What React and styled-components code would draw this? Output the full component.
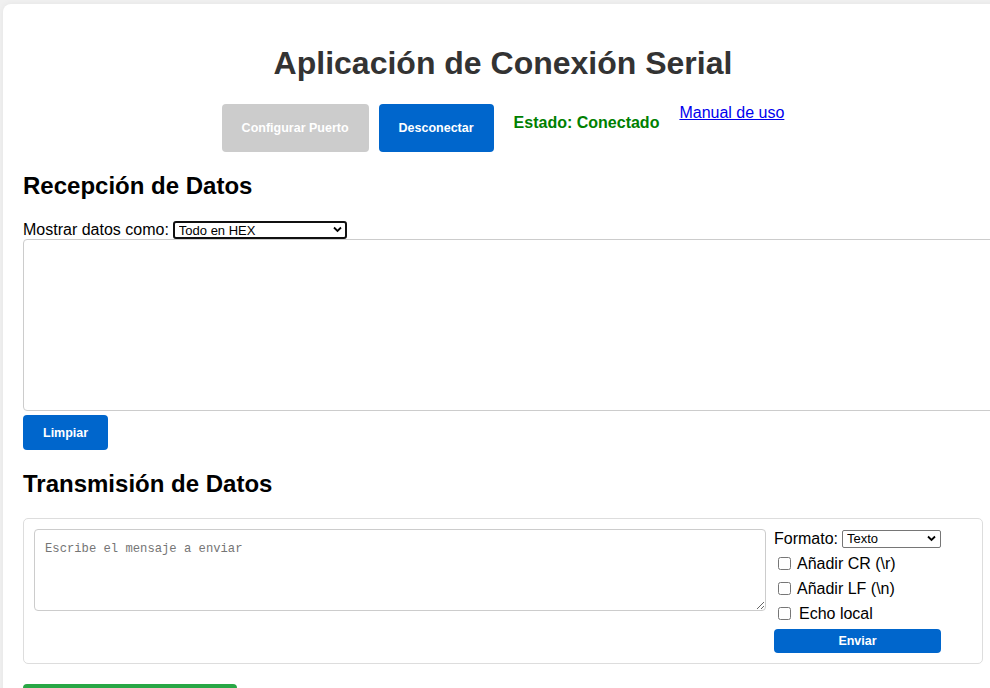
import React, {useState} from "react";
import styled, {createGlobalStyle} from "styled-components";

const GlobalStyle = createGlobalStyle`
  html, body {
    margin: 0;
    overflow: hidden;
  }
  body {
    background: #f0f0f0;
    font-family: "Liberation Sans", Arial, sans-serif;
    padding: 4px 0 0 3px;
  }
`;

const Page = styled.div`
  width: 1000px;
  box-sizing: border-box;
  padding: 20px;
  background: #fff;
  border-radius: 8px;
  box-shadow: 0 0 6px rgba(0, 0, 0, 0.05);
`;

const Title = styled.h1`
  margin: 21px 0 22px;
  font-size: 32px;
  line-height: 37px;
  text-align: center;
  color: #333;
`;

const Controls = styled.div`
  display: flex;
  justify-content: center;
  align-items: flex-start;
  gap: 10px;
`;

const Button = styled.button`
  font-family: "Liberation Sans", Arial, sans-serif;
  font-size: 12.5px;
  font-weight: bold;
  color: #fff;
  background: ${p => (p.$disabled ? "#cccccc" : p.$green ? "#28a745" : "#0066cc")};
  border: none;
  border-radius: 4px;
  padding: 0 20px;
  height: ${p => p.$h || 35}px;
  width: ${p => (p.$w ? p.$w + "px" : "auto")};
  cursor: ${p => (p.$disabled ? "default" : "pointer")};
`;

const Status = styled.span`
  padding: 10px;
  font-size: 16px;
  line-height: 18px;
  font-weight: bold;
  color: #008000;
`;

const ManualLink = styled.a`
  font-size: 16px;
  line-height: 18px;
  color: #0000ee;
  text-decoration: underline;
`;

const SectionTitle = styled.h2`
  margin: 20px 0 20px;
  font-size: 24px;
  line-height: 28px;
  color: #000;
`;

const FieldRow = styled.div`
  display: flex;
  align-items: center;
  font-size: 16px;
  line-height: 18px;
  height: 19px;
`;

const SelectWrap = styled.span`
  position: relative;
  display: inline-flex;
  margin-left: 4px;
  width: ${p => p.$w}px;
`;

const Select = styled.select`
  appearance: none;
  width: 100%;
  height: 18px;
  box-sizing: border-box;
  padding: 0 0 0 4px;
  font-family: "Liberation Sans", Arial, sans-serif;
  font-size: 13px;
  color: #000;
  background: #fff;
  border: ${p => (p.$focus ? "2px solid #101010" : "1px solid #767676")};
  border-radius: ${p => (p.$focus ? 3 : 2)}px;
  outline: none;
`;

const Chevron = styled.svg`
  position: absolute;
  right: 5px;
  top: 5px;
  pointer-events: none;
`;

const ReceiveArea = styled.textarea`
  display: block;
  width: 100%;
  box-sizing: content-box;
  padding: 0 10px;
  height: 170px;
  margin: 0;
  border: 1px solid #ccc;
  border-radius: 4px;
  resize: none;
  font-family: "Liberation Mono", monospace;
`;

const ClearRow = styled.div`
  margin-top: 4px;
`;

const SendBox = styled.div`
  display: flex;
  gap: 8px;
  padding: 10px;
  border: 1px solid #ddd;
  border-radius: 5px;
`;

const SendArea = styled.textarea`
  flex: 0 0 732px;
  height: 82px;
  box-sizing: border-box;
  padding: 12px 10px 10px;
  border: 1px solid #ccc;
  border-radius: 4px;
  font-family: "Liberation Mono", monospace;
  font-size: 12.2px;
  &::placeholder {
    color: #757575;
  }
`;

const Options = styled.div`
  display: flex;
  flex-direction: column;
  gap: 6px;
  width: 167px;
`;

const CheckRow = styled.label`
  display: flex;
  align-items: center;
  height: 19px;
  font-size: 16px;
  color: #000;
  input {
    width: 13px;
    height: 13px;
    margin: 0 6px 0 4px;
  }
`;

const CheckText = styled.span`
  padding-left: ${p => p.$indent || 0}px;
`;

const Footer = styled.div`
  margin-top: 20px;
`;

const ChevronIcon = () => (
  <Chevron width="9" height="7" viewBox="0 0 9 7">
    <path d="M1 1.5 L4.5 5 L8 1.5" fill="none" stroke="#000" strokeWidth="1.8"/>
  </Chevron>
);

export default function App() {
  const [mode, setMode] = useState("hex");
  const [format, setFormat] = useState("text");
  const [msg, setMsg] = useState("");

  return (
    <>
      <GlobalStyle/>
      <Page>
        <Title>Aplicación de Conexión Serial</Title>
        <Controls>
          <Button $disabled $h={48}>Configurar Puerto</Button>
          <Button $h={48}>Desconectar</Button>
          <Status>Estado: Conectado</Status>
          <ManualLink href="#">Manual de uso</ManualLink>
        </Controls>

        <SectionTitle>Recepción de Datos</SectionTitle>
        <FieldRow>
          Mostrar datos como:
          <SelectWrap $w={174}>
            <Select $focus value={mode} onChange={e => setMode(e.target.value)}>
              <option value="hex">Todo en HEX</option>
              <option value="ascii">Todo en ASCII</option>
              <option value="mixed">Mixto</option>
            </Select>
            <ChevronIcon/>
          </SelectWrap>
        </FieldRow>
        <ReceiveArea readOnly/>
        <ClearRow>
          <Button>Limpiar</Button>
        </ClearRow>

        <SectionTitle>Transmisión de Datos</SectionTitle>
        <SendBox>
          <SendArea
            placeholder="Escribe el mensaje a enviar"
            value={msg}
            onChange={e => setMsg(e.target.value)}
          />
          <Options>
            <FieldRow>
              Formato:
              <SelectWrap $w={99}>
                <Select value={format} onChange={e => setFormat(e.target.value)}>
                  <option value="text">Texto</option>
                  <option value="hex">HEX</option>
                </Select>
                <ChevronIcon/>
              </SelectWrap>
            </FieldRow>
            <CheckRow><input type="checkbox"/><CheckText>Añadir CR (\r)</CheckText></CheckRow>
            <CheckRow><input type="checkbox"/><CheckText>Añadir LF (\n)</CheckText></CheckRow>
            <CheckRow><input type="checkbox"/><CheckText $indent={2}>Echo local</CheckText></CheckRow>
            <Button $h={24} $w={167}>Enviar</Button>
          </Options>
        </SendBox>
        <Footer>
          <Button $green $h={40} $w={214}>Guardar datos recibidos</Button>
        </Footer>
      </Page>
    </>
  );
}
